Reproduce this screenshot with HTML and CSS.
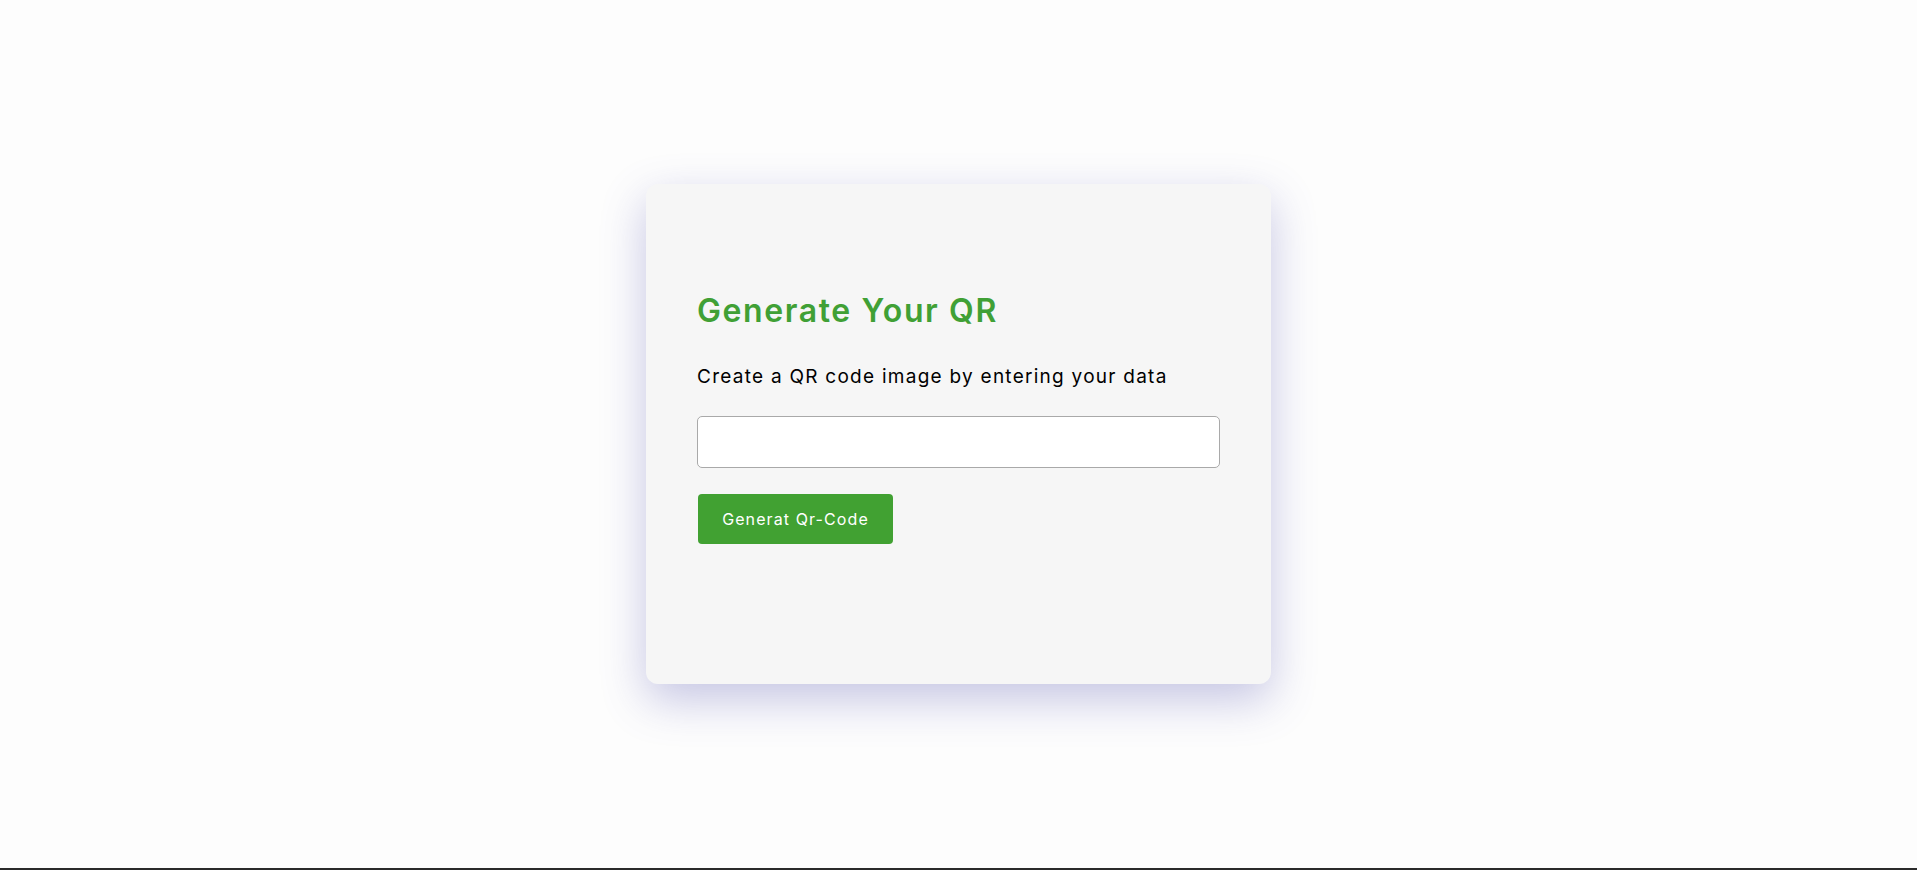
FILE: index.html
```html
<!DOCTYPE html>
<html lang="en">
<head>
<meta charset="utf-8">
<title>QR Code Generator</title>
<link rel="stylesheet" href="styles.css">
</head>
<body>
<main class="page">
  <section class="card">
    <h1 class="title">Generate Your QR</h1>
    <p class="subtitle">Create a QR code image by entering your data</p>
    <input class="data-input" type="text">
    <button class="generate-btn" type="button">Generat Qr-Code</button>
  </section>
</main>
<div class="bottom-bar"></div>
</body>
</html>
```
FILE: styles.css
```css
* { box-sizing: border-box; }

html, body {
  margin: 0;
  padding: 0;
}

body {
  height: 870px;
  display: flex;
  flex-direction: column;
  background: #fdfdfd;
  font-family: "Inter", "Open Sans", sans-serif;
  overflow: hidden;
}

.page {
  flex: 1;
  display: flex;
  align-items: center;
  justify-content: center;
}

.card {
  width: 625px;
  height: 500px;
  padding: 107px 50px 50px 51px;
  background: #f6f6f6;
  border-radius: 12px;
  box-shadow: 0 16px 45px rgba(80, 80, 175, 0.32);
  display: flex;
  flex-direction: column;
  align-items: flex-start;
}

.title {
  margin: 0;
  font-size: 32px;
  line-height: 40px;
  font-weight: 600;
  color: #40a035;
  letter-spacing: 1.6px;
}

.subtitle {
  margin: 32px 0 0;
  font-size: 19px;
  line-height: 27px;
  font-weight: 400;
  color: #000;
  letter-spacing: 1.26px;
}

.data-input {
  margin-top: 26px;
  width: 523px;
  height: 52px;
  border: 1px solid #a9a9a9;
  border-radius: 5px;
  background: #fff;
  font: inherit;
  padding: 0 12px;
}

.generate-btn {
  margin: 26px 0 0 1px;
  height: 50px;
  width: 195px;
  border: none;
  border-radius: 4px;
  background: #41a132;
  color: #fff;
  font-family: inherit;
  font-size: 16px;
  font-weight: 400;
  letter-spacing: 1.1px;
  cursor: pointer;
}

.bottom-bar {
  height: 2px;
  background: #2b2b2b;
}
```
